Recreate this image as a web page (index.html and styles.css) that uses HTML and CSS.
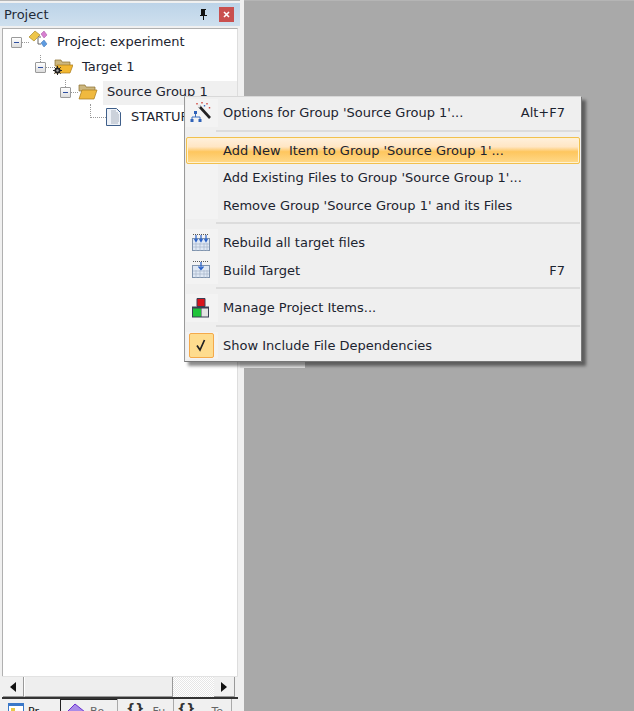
FILE: index.html
```html
<!DOCTYPE html>
<html>
<head>
    <meta charset="utf-8">
    <title>Project</title>
    <link rel="stylesheet" href="styles.css">
</head>
<body>
    <div class="panel">
        <div class="titlebar">
            <span class="title">Project</span>
            <svg class="pin" width="10" height="11" viewBox="0 0 10 11"><path d="M3 0h5v1H7v5h2v1H6v4H5V7H2V6h1V1H3z" fill="#111"/></svg>
            <span class="close">
                <svg width="7" height="7" viewBox="0 0 7 7"><path d="M1 1l5 5M6 1L1 6" stroke="#fff" stroke-width="1.6"/></svg>
            </span>
        </div>

        <div class="tree">
            <div class="row lvl0">
                <span class="toggle"></span>
                <svg class="node-icon lift" width="20" height="20" viewBox="0 0 20 20">
                    <path d="M1 7l6-6 5 4-6 6z" fill="#eec64a" stroke="#a88a2c" stroke-width=".7"/>
                    <path d="M13 4l3-3 3 4-3 3z" fill="#d77fd0" stroke="#a050a0" stroke-width=".5"/>
                    <path d="M13 13l3-3 3 4-3 3z" fill="#5e9be0" stroke="#3a6fb0" stroke-width=".5"/>
                    <path d="M10 8v6h3M10 7h3" fill="none" stroke="#555" stroke-width=".9"/>
                </svg>
                <span class="label">Project: experiment</span>
            </div>
            <div class="row lvl1">
                <span class="toggle"></span>
                <svg class="node-icon" width="20" height="20" viewBox="0 0 20 20">
                    <path d="M2 2h6l1 2h8v4H2z" fill="#cdb77f" stroke="#8a6f2c" stroke-width=".7"/>
                    <path d="M4 7h16l-3 8H2z" fill="#f2b731" stroke="#a67a1c" stroke-width=".7"/>
                    <circle cx="4.500" cy="12.500" r="3" fill="#222"/>
                    <path d="M4.500 8v9M0 12.500h9M1.300 9.300l6.400 6.400M7.700 9.300l-6.400 6.400" stroke="#222"/>
                    <circle cx="4.500" cy="12.500" r="1.200" fill="#aaa"/>
                </svg>
                <span class="label">Target 1</span>
            </div>
            <div class="row lvl2 current">
                <span class="toggle"></span>
                <svg class="node-icon" width="20" height="20" viewBox="0 0 20 20">
                    <path d="M1 2h6l1 2h9v4H1z" fill="#cdb77f" stroke="#8a6f2c" stroke-width=".7"/>
                    <path d="M4 7h15l-3 9H1z" fill="#f0b93f" stroke="#a67a1c" stroke-width=".7"/>
                </svg>
                <span class="label">Source Group 1</span>
            </div>
            <div class="row lvl3">
                <svg class="node-icon lift-small" width="17" height="20" viewBox="0 0 17 20">
                    <path d="M1.500 1.500h10l4 4v13h-14z" fill="#eef2f8" stroke="#3f5f8a"/>
                    <path d="M6 4h5M6 6h7M6 8h8M6 10h8M6 12h8M6 14h8M6 16h7" stroke="#aab2be"/>
                </svg>
                <span class="label">STARTUP</span>
            </div>
        </div>

        <div class="hscroll">
            <span class="arrow-btn"><i class="arrow-left"></i></span>
            <span class="thumb"></span>
            <span class="track"></span>
            <span class="arrow-btn"><i class="arrow-right"></i></span>
        </div>

        <div class="tabs">
            <span class="tab first">
                <svg width="16" height="14" viewBox="0 0 16 14"><rect x=".5" y=".5" width="15" height="13" fill="#fff" stroke="#3a78c8"/><rect x="1" y="1" width="14" height="2" fill="#3a78c8"/><rect x="3" y="5" width="4" height="4" fill="#e8c84a"/></svg>
                <span class="tab-text dark">Pr</span>
            </span>
            <span class="tab second">
                <svg width="20" height="14" viewBox="0 0 20 14"><path d="M1 9l8-8 10 8-10 5z" fill="#a98be8" stroke="#6a2fd0"/></svg>
                <span class="tab-text">Bo</span>
            </span>
            <span class="tab third">
                <span class="braces">{}</span>
                <span class="tab-text">Fu</span>
            </span>
            <span class="tab fourth">
                <span class="braces">{}</span>
                <span class="tab-text">Te</span>
            </span>
        </div>
    </div>

    <div class="workspace"></div>
    <div class="shadow-stub"></div>

    <div class="menu">
        <div class="item">
            <span class="gutter">
                <svg width="22" height="22" viewBox="0 0 22 22">
                    <path d="M9 4l11 12" stroke="#222" stroke-width="2.600"/>
                    <path d="M8 3l2 2" stroke="#e8e8e8" stroke-width="2.600"/>
                    <path d="M7 1v1.500M12 0v1.500M17 1v1.500M19.500 5v1.500" stroke="#d0443c" stroke-width="1.400"/>
                    <path d="M14.500 3v1.500" stroke="#3b6fc0" stroke-width="1.400"/>
                    <path d="M5.500 12v3M2 18v-3h8v3" fill="none" stroke="#3b6fc0"/>
                    <path d="M4 9h3v3H4zM0.500 17h3v3h-3zM8.500 17h3v3h-3z" fill="#2f62b8"/>
                </svg>
            </span>
            <span class="text">Options for Group 'Source Group 1'...</span>
            <span class="key">Alt+F7</span>
        </div>
        <div class="sep"></div>
        <div class="item hot">
            <span class="gutter"></span>
            <span class="text">Add New&nbsp; Item to Group 'Source Group 1'...</span>
        </div>
        <div class="item">
            <span class="gutter"></span>
            <span class="text">Add Existing Files to Group 'Source Group 1'...</span>
        </div>
        <div class="item">
            <span class="gutter"></span>
            <span class="text">Remove Group 'Source Group 1' and its Files</span>
        </div>
        <div class="sep"></div>
        <div class="item">
            <span class="gutter">
                <svg width="20" height="20" viewBox="0 0 20 20">
                    <rect x="1.500" y="5.500" width="17" height="12" fill="#dfe8f4" stroke="#7f93ad"/>
                    <path d="M2 11h16M2 14h16M5 10v8M9 10v8M13 10v8M16 10v8" stroke="#a8b6c8" stroke-width=".7"/>
                    <path d="M2 1.500h16" stroke="#555" stroke-dasharray="1 1"/>
                    <path d="M5 2v6M3.500 6L5 8.500 6.500 6M10 2v6M8.500 6l1.500 2.500L11.500 6M15 2v6M13.500 6l1.500 2.500L16.500 6" fill="none" stroke="#2a62c8" stroke-width="1.200"/>
                </svg>
            </span>
            <span class="text">Rebuild all target files</span>
        </div>
        <div class="item">
            <span class="gutter">
                <svg width="20" height="20" viewBox="0 0 20 20">
                    <rect x="1.500" y="5.500" width="17" height="12" fill="#dfe8f4" stroke="#7f93ad"/>
                    <path d="M2 11h16M2 14h16M5 10v8M9 10v8M13 10v8M16 10v8" stroke="#a8b6c8" stroke-width=".7"/>
                    <path d="M2 1.500h16" stroke="#555" stroke-dasharray="1 1"/>
                    <path d="M10 2v7M7.500 6.500L10 9.500l2.500-3" fill="none" stroke="#2a62c8" stroke-width="1.300"/>
                </svg>
            </span>
            <span class="text">Build Target</span>
            <span class="key">F7</span>
        </div>
        <div class="sep"></div>
        <div class="item">
            <span class="gutter">
                <svg width="20" height="20" viewBox="0 0 20 20">
                    <path d="M6 .500h8v8H6z" fill="#d9141c" stroke="#3a3f55"/>
                    <path d="M1 8.500h17v11H1z" fill="#3a3f55"/>
                    <rect x="2" y="10.500" width="8" height="8" fill="#1fc43a"/>
                    <rect x="10.500" y="10.500" width="6.500" height="8" fill="#e4e4e4"/>
                </svg>
            </span>
            <span class="text">Manage Project Items...</span>
        </div>
        <div class="sep"></div>
        <div class="item">
            <span class="gutter">
                <span class="check">
                    <svg width="14" height="14" viewBox="0 0 14 14"><path d="M3 7.500L6 12l4.500-10" fill="none" stroke="#222" stroke-width="1.700"/></svg>
                </span>
            </span>
            <span class="text">Show Include File Dependencies</span>
        </div>
    </div>
</body>
</html>
```

FILE: styles.css
```css
* {
    box-sizing: border-box;
}
html, body {
    height: 100%;
}
body {
    margin: 0;
    width: 634px;
    height: 711px;
    overflow: hidden;
    display: flex;
    background: #f0f0f0;
    font-family: "DejaVu Sans", sans-serif;
    font-size: 13px;
    color: #1c2430;
    position: relative;
}

/* left panel */
.panel {
    width: 240px;
    height: 711px;
    padding-top: 2px;
    display: flex;
    flex-direction: column;
    background: #f0f0f0;
    border-top: 1px solid #b5b5b5;
}
.titlebar {
    height: 23px;
    display: flex;
    align-items: center;
    padding: 0 6px 0 4px;
    background: linear-gradient(#bcd3e8, #cfe0ee);
}
.title {
    flex: 1;
    color: #1f2a38;
}
.pin {
    margin-right: 11px;
}
.close {
    width: 15px;
    height: 15px;
    background: #c9504f;
    display: flex;
    align-items: center;
    justify-content: center;
}
.tree {
    flex: 1;
    margin: 2px 2px 0 2px;
    padding-top: 1px;
    background: #fff;
    border: 1px solid #b0b0b0;
    border-right-color: #ddd;
    border-bottom: none;
}
.row {
    position: relative;
    height: 25px;
    display: flex;
    align-items: center;
}
.lvl0 { padding-left: 8px; }
.lvl1 { padding-left: 32px; }
.lvl2 { padding-left: 57px; }
.lvl3 { padding-left: 102px; }
.toggle {
    width: 11px;
    height: 11px;
    margin-right: 7px;
    border: 1px solid #9a9a9a;
    border-radius: 1px;
    background: linear-gradient(#fff, #dcdcdc);
    position: relative;
    flex: none;
}
.toggle::after {
    content: "";
    position: absolute;
    left: 2px;
    top: 4px;
    width: 5px;
    height: 1px;
    background: #2f4fa0;
}
/* dotted tree lines */
.toggle::before {
    content: "";
    position: absolute;
    left: 10px;
    top: 4px;
    width: 7px;
    border-top: 1px dotted #999;
}
.lvl1::before, .lvl2::before {
    content: "";
    position: absolute;
    top: 0;
    height: 7px;
    border-left: 1px dotted #999;
}
.lvl1::before { left: 37px; }
.lvl2::before { left: 62px; }
.lvl3::before {
    content: "";
    position: absolute;
    left: 87px;
    top: -1px;
    width: 15px;
    height: 13px;
    border-left: 1px dotted #999;
    border-bottom: 1px dotted #999;
}
.node-icon {
    flex: none;
}
.lvl0 .node-icon {
    margin-left: -1px;
}
.lift {
    margin-bottom: 6px;
}
.lift-small {
    margin-bottom: 2px;
}
.label {
    margin-left: 9px;
    margin-bottom: 2px;
    white-space: nowrap;
}
.current .label {
    background: #f0f0f0;
    padding: 0 29px 2px 4px;
    margin-left: 5px;
    margin-bottom: 0;
    line-height: 22px;
}
.lvl3 .label {
    margin-left: 9px;
}

/* scrollbar and tabs */
.hscroll {
    height: 23px;
    margin: 0 2px;
    padding: 0 3px 0 1px;
    display: flex;
    align-items: stretch;
    background: #f0f0f0;
    border-top: 1px solid #e2e2e2;
    border-bottom: 2px solid #333;
}
.arrow-btn {
    width: 21px;
    display: flex;
    align-items: center;
    justify-content: center;
    background: #f0f0f0;
    border-right: 1px solid #999;
    border-bottom: 1px solid #999;
    flex: none;
}
.thumb {
    width: 149px;
    background: #eeeeee;
    border-right: 1px solid #999;
    border-bottom: 1px solid #999;
    border-left: 1px solid #fff;
}
.track {
    flex: 1;
    background: repeating-conic-gradient(#fff 0 25%, #e6e6e6 0 50%) 0 0 / 2px 2px;
}
.arrow-left, .arrow-right {
    width: 0;
    height: 0;
    border-top: 5px solid transparent;
    border-bottom: 5px solid transparent;
}
.arrow-left {
    border-right: 6px solid #111;
}
.arrow-right {
    border-left: 6px solid #111;
}
.tabs {
    height: 12px;
    display: flex;
    overflow: hidden;
    font-size: 11px;
}
.tab {
    display: flex;
    gap: 4px;
    align-items: flex-start;
    padding-top: 4px;
    white-space: nowrap;
    overflow: hidden;
    flex: none;
}
.first { width: 60px; padding-left: 8px; background: #f0f0f0; }
.second { width: 57px; padding-left: 5px; border-left: 1px solid #222; border-top: 1px solid #222; background: #f0f0f0; padding-top: 3px; }
.third { width: 57px; padding-left: 8px; gap: 8px; border-right: 1px solid #aaa; border-left: 1px solid #aaa; }
.fourth { width: 58px; padding-left: 3px; gap: 16px; border-right: 1px solid #aaa; }
.tab-text { color: #666; margin-top: 2px; }
.tab-text.dark { color: #111; }
.braces {
    font-weight: bold;
    color: #333;
    font-size: 13px;
    line-height: 12px;
}

/* grey area */
.workspace {
    width: 390px;
    height: 711px;
    margin-left: 4px;
    background: #a9a9a9;
    border-top: 1px solid #b5b5b5;
}
.shadow-stub {
    position: absolute;
    left: 240px;
    top: 362px;
    width: 65px;
    height: 6px;
    background: #e4e4e4;
}

/* context menu */
.menu {
    position: absolute;
    left: 184px;
    top: 96px;
    width: 398px;
    height: 266px;
    padding: 2px 1px;
    background: #efefef;
    border: 1px solid #9a9a9a;
    border-top-color: #d8d8d8;
    border-right-color: #777;
    border-bottom-color: #777;
    box-shadow: 4px 4px 3px rgba(0, 0, 0, 0.45);
}
.item {
    height: 27.500px;
    display: flex;
    align-items: center;
    padding-right: 15px;
    white-space: nowrap;
}
.gutter {
    width: 32px;
    height: 100%;
    margin-right: 5px;
    padding-right: 2px;
    flex: none;
    display: flex;
    align-items: center;
    justify-content: center;
    background: #f3f3f3;
}
.text {
    flex: 1;
}
.key {
    flex: none;
}
.sep {
    height: 10px;
    margin-left: 30px;
    padding-top: 3.250px;
}
.sep::before {
    content: "";
    display: block;
    height: 2px;
    background: #dcdcdc;
}
.hot {
    height: 27px;
    border: 1px solid #f2c04e;
    border-radius: 2px;
    background: linear-gradient(#fff0dc 0%, #ffe6c4 35%, #fec65e 55%, #ffd98a 100%);
    box-shadow: inset 0 0 0 1px #fff2d0;
    margin-bottom: 0.500px;
}
.hot .gutter {
    background: none;
    width: 31px;
}
.check {
    width: 25px;
    height: 25px;
    flex: none;
    display: flex;
    align-items: center;
    justify-content: center;
    border: 1px solid #f4a94a;
    border-radius: 2px;
    background: #fedc8e;
}
```
